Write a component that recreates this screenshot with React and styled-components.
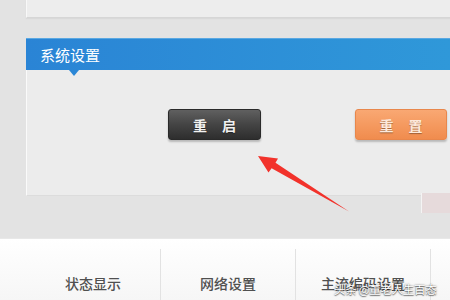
import React from 'react'
import styled, { createGlobalStyle } from 'styled-components'

const Global = createGlobalStyle`
  html, body { margin: 0; padding: 0; }
  body {
    background: #e3e3e3;
    font-family: "Noto Sans CJK SC", "Noto Sans", sans-serif;
  }
`

export default function App() {
  return (
    <Page>
      <Global />
      <Content>
        <TopPanel />
        <Section>
          <Header>
            系统设置
            <Pointer />
          </Header>
          <Body>
            <Button variant="dark"><span>重</span><span>启</span></Button>
            <Button variant="orange"><span>重</span><span>置</span></Button>
          </Body>
        </Section>
        <Strip>
          <Pink />
        </Strip>
      </Content>
      <Nav>
        <Tab>状态显示</Tab>
        <Tab>网络设置</Tab>
        <Tab>主流编码设置</Tab>
        <Tab />
      </Nav>
      <Arrow width="105" height="70" viewBox="0 0 105 70">
        <polygon
          points="8,8 28,10.5 25.5,14.8 99,63.5 21.6,20.3 18.5,24.5"
          fill="#f2322b"
        />
      </Arrow>
      <Watermark>头条 @董老人生百态</Watermark>
    </Page>
  )
}

const Page = styled.div`
  position: relative;
  width: 450px;
  height: 300px;
  overflow: hidden;
  display: flex;
  flex-direction: column;
  background: #e3e3e3;
`

const Content = styled.div`
  padding-left: 26px;
  display: flex;
  flex-direction: column;
`

const TopPanel = styled.div`
  height: 17px;
  background: #ededed;
  border-left: 1px solid #f8f8f8;
  border-bottom: 1px solid #d6d6d6;
  box-shadow: 0 1px 1px #d9d9d9;
`

const Section = styled.div`
  margin-top: 20px;
  display: flex;
  flex-direction: column;
`

const Header = styled.div`
  position: relative;
  height: 32px;
  box-sizing: border-box;
  padding-left: 14px;
  display: flex;
  align-items: center;
  color: #fff;
  font-size: 15px;
  background: linear-gradient(90deg, #2a84d5, #2f98d9);
  border-top: 1px solid #5aa8e2;
`

const Pointer = styled.span`
  position: absolute;
  left: 43px;
  bottom: -6px;
  width: 0;
  height: 0;
  border-left: 5px solid transparent;
  border-right: 5px solid transparent;
  border-top: 6px solid #2b87d6;
`

const Body = styled.div`
  height: 126px;
  box-sizing: border-box;
  background: #ececec;
  border-left: 1px solid #fafafa;
  border-bottom: 1px solid #dcdcdc;
  padding: 39px 0 0 141px;
  display: flex;
  align-items: flex-start;
  gap: 94px;
`

const Button = styled.div`
  width: ${p => (p.variant === 'dark' ? 93 : 92)}px;
  height: 31px;
  box-sizing: border-box;
  border-radius: 3px;
  display: flex;
  align-items: center;
  justify-content: center;
  gap: 15px;
  font-size: 14px;
  font-weight: bold;
  color: ${p => (p.variant === 'dark' ? '#f2f2f2' : '#fde9dc')};
  background: ${p =>
    p.variant === 'dark'
      ? 'linear-gradient(180deg, #606060 0%, #444 50%, #2e2e2e 100%)'
      : 'linear-gradient(180deg, #f9a873 0%, #f59a60 50%, #f08c4e 100%)'};
  border: 1px solid ${p => (p.variant === 'dark' ? '#2a2a2a' : '#e8874c')};
  box-shadow: 0 2px 2px rgba(0, 0, 0, 0.22);
  text-shadow: 0 1px 1px rgba(0, 0, 0, 0.35);
`

const Strip = styled.div`
  height: 42px;
  display: flex;
  justify-content: flex-end;
`

const Pink = styled.div`
  margin-top: -3px;
  width: 28px;
  height: 20px;
  background: #e6dadb;
  border-left: 1px solid #f4f4f4;
`

const Nav = styled.div`
  flex: 1;
  display: flex;
  padding-left: 26px;
  background: linear-gradient(180deg, #ffffff 0%, #f6f6f6 100%);
  border-top: 1px solid #e8e8e8;
`

const Tab = styled.div`
  width: 135px;
  flex-shrink: 0;
  margin-top: 10px;
  border-right: 1px solid #e2e2e2;
  display: flex;
  justify-content: center;
  padding-top: 24px;
  box-sizing: border-box;
  font-size: 14px;
  font-weight: 500;
  color: #505050;
`

const Arrow = styled.svg`
  position: absolute;
  left: 250px;
  top: 148px;
`

const Watermark = styled.div`
  position: absolute;
  left: 334px;
  top: 281px;
  font-size: 11.5px;
  letter-spacing: -0.3px;
  color: #fff;
  white-space: nowrap;
  text-shadow: 0 0 2px rgba(0, 0, 0, 0.7), 0 1px 1px rgba(0, 0, 0, 0.5);
`
